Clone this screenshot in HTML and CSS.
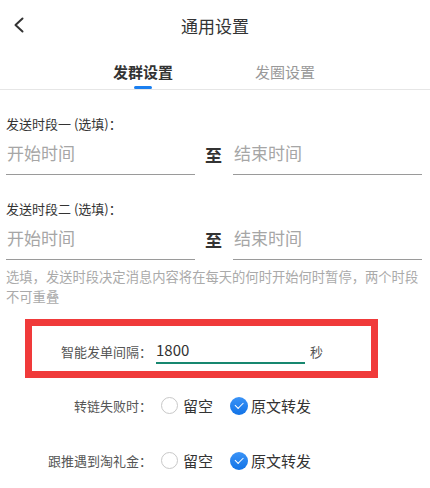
FILE: index.html
```html
<!DOCTYPE html>
<html lang="zh-CN">

<head>
	<meta charset="UTF-8">
	<meta name="viewport" content="width=device-width, initial-scale=1.0">
	<title>通用设置</title>
	<link rel="stylesheet" href="styles.css">
</head>

<body>
	<header class="topbar">
		<a class="back" href="#">
			<svg width="12" height="16" viewBox="0 0 12 16">
				<path d="M9.5 1.5 L2.5 8 L9.5 14.5" fill="none" stroke="#333" stroke-width="2" stroke-linecap="round" stroke-linejoin="round" />
			</svg>
		</a>
		<div class="title">通用设置</div>
	</header>

	<nav class="tabs">
		<div class="tab active">
			<span>发群设置</span>
			<i class="bar"></i>
		</div>
		<div class="tab">
			<span>发圈设置</span>
			<i class="bar"></i>
		</div>
	</nav>

	<div class="section">
		<div class="group">
			<div class="group-label">发送时段一 (选填)：</div>
			<div class="range">
				<div class="field first">开始时间</div>
				<div class="to">至</div>
				<div class="field">结束时间</div>
			</div>
		</div>

		<div class="group">
			<div class="group-label">发送时段二 (选填)：</div>
			<div class="range">
				<div class="field first">开始时间</div>
				<div class="to">至</div>
				<div class="field">结束时间</div>
			</div>
		</div>

		<p class="hint">选填，发送时段决定消息内容将在每天的何时开始何时暂停，两个时段不可重叠</p>
	</div>

	<div class="highlight">
		<div class="row">
			<div class="row-label">智能发单间隔：</div>
			<div class="interval">1800</div>
			<div class="unit">秒</div>
		</div>
	</div>

	<div class="option">
		<div class="option-label">转链失败时：</div>
		<div class="radio"><i class="dot"></i>留空</div>
		<div class="radio checked"><i class="dot"></i>原文转发</div>
	</div>

	<div class="option">
		<div class="option-label">跟推遇到淘礼金：</div>
		<div class="radio"><i class="dot"></i>留空</div>
		<div class="radio checked"><i class="dot"></i>原文转发</div>
	</div>
</body>

</html>
```

FILE: styles.css
```css
body {
	font-family: "Noto Sans CJK SC", "Noto Sans", sans-serif;
	margin: 0;
	padding: 0;
	width: 430px;
	color: #333;
	background: #fff;
}

.topbar {
	height: 50px;
	display: flex;
	align-items: center;
	justify-content: center;
	position: relative;
}

.topbar .back {
	position: absolute;
	left: 13px;
	top: 17px;
	display: flex;
}

.topbar .title {
	font-size: 17px;
	line-height: 24px;
	padding-top: 1px;
}

.tabs {
	display: flex;
	justify-content: center;
	border-bottom: 1px solid #e6e6e6;
	padding-right: 2px;
}

.tab {
	width: 142px;
	display: flex;
	flex-direction: column;
	align-items: center;
	padding-top: 11px;
	font-size: 15px;
	line-height: 21px;
	color: #999;
}

.tab .bar {
	display: block;
	width: 18px;
	height: 3px;
	margin-top: 4px;
	border-radius: 2px;
}

.tab.active {
	color: #333;
	font-weight: bold;
}

.tab.active .bar {
	background: #1a7ff0;
}

.section {
	padding: 0 8px 0 6px;
}

.group {
	padding-top: 25px;
}

.group-label {
	font-size: 13px;
	line-height: 18px;
}

.range {
	display: flex;
	align-items: center;
}

.field {
	flex: 1;
	font-size: 17px;
	line-height: 24px;
	color: #a6a6a6;
	padding: 8px 0 9px 1px;
	border-bottom: 1px solid #9a9a9a;
}

.field.first {
	flex: none;
	width: 188px;
}

.to {
	font-size: 17px;
	font-weight: bold;
	margin: 0 11px 0 10px;
}

.hint {
	margin: 7px 0 0;
	font-size: 13.3px;
	line-height: 20px;
	color: #aaa;
}

.highlight {
	margin: 12px 0 0 25px;
	width: 339px;
	border: 7px solid #f03a3a;
}

.row {
	display: flex;
	align-items: center;
	padding: 12px 0 7px;
}

.row-label {
	width: 120px;
	text-align: right;
	font-size: 13px;
	color: #555;
}

.interval {
	width: 149px;
	margin-left: 4px;
	font-size: 15px;
	line-height: 24px;
	border-bottom: 2px solid #17876f;
}

.unit {
	margin-left: 5px;
	font-size: 13px;
	color: #555;
}

.option {
	display: flex;
	align-items: center;
	height: 55px;
}

.option:first-of-type {
	margin-top: 5px;
}

.option-label {
	width: 152px;
	text-align: right;
	font-size: 13px;
	color: #555;
}

.radio {
	display: flex;
	align-items: center;
	font-size: 15px;
	margin-left: 9px;
}

.radio + .radio {
	margin-left: 17px;
}

.radio .dot {
	box-sizing: border-box;
	width: 17px;
	height: 17px;
	border: 1px solid #c8c8c8;
	border-radius: 50%;
	margin-right: 5px;
	position: relative;
}

.radio.checked .dot {
	width: 18px;
	height: 18px;
	border: none;
	margin-right: 3px;
	background: linear-gradient(#3a93f7, #1273e6);
}

.radio.checked .dot::after {
	content: "";
	position: absolute;
	left: 5px;
	top: 5px;
	width: 7px;
	height: 3.5px;
	border-left: 1.6px solid #fff;
	border-bottom: 1.6px solid #fff;
	transform: rotate(-45deg);
}
```
